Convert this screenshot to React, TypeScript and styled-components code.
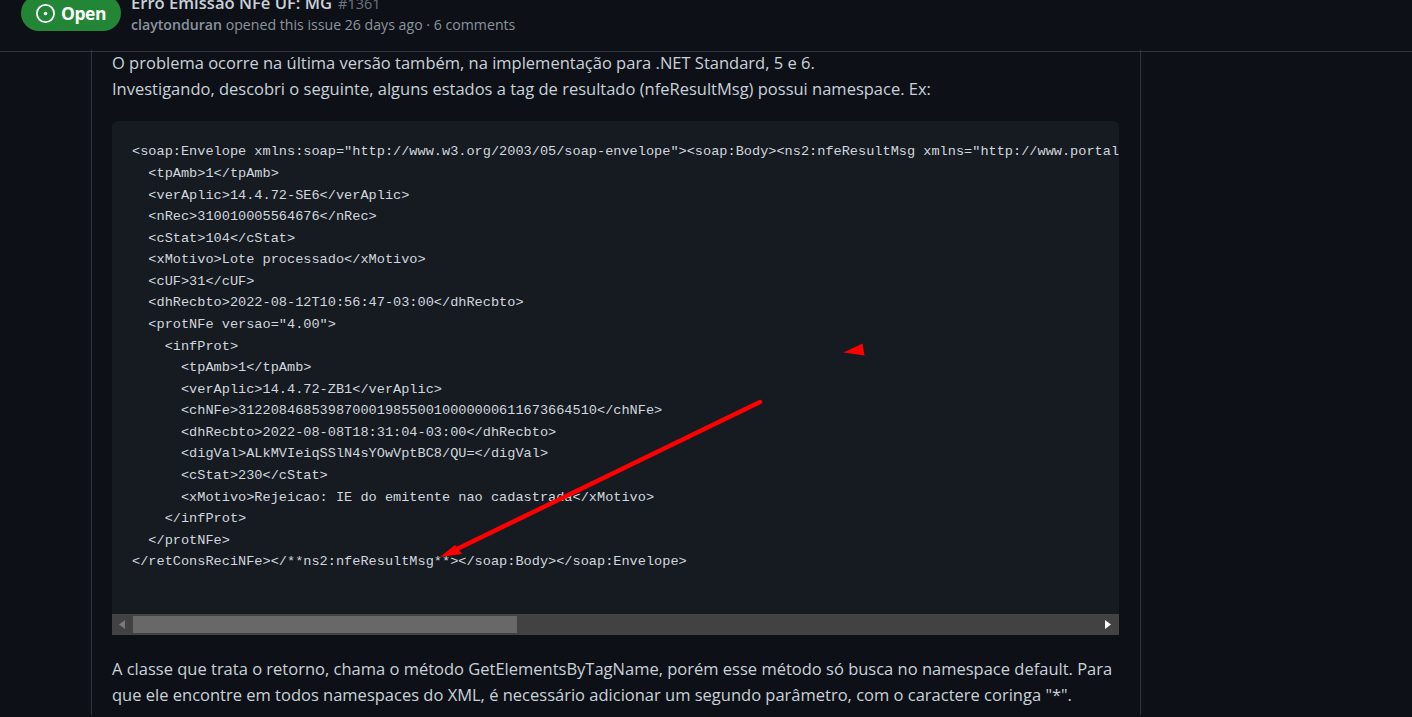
import React from "react";
import styled, { createGlobalStyle } from "styled-components";

const Global = createGlobalStyle`
  html, body { margin: 0; padding: 0; background: #0d1117; }
  body { font-family: "Open Sans", "Noto Sans", sans-serif; color: #c9d1d9; }
`;

const Page = styled.div`
  position: relative;
  height: 717px;
  overflow: hidden;
  background: #0d1117;
`;

const Header = styled.header`
  height: 51px;
  border-bottom: 1px solid #30363d;
  padding: 0 0 0 21px;
  display: flex;
  align-items: flex-end;
  gap: 10px;
  overflow: hidden;
`;

const StateBadge = styled.div`
  flex: none;
  width: 100px;
  height: 36px;
  margin-bottom: 20px;
  border-radius: 18px;
  background: #238636;
  color: #fff;
  display: flex;
  align-items: center;
  justify-content: center;
  gap: 6px;
  font-size: 17.5px;
  font-weight: 700;
  letter-spacing: -0.5px;
`;

const HeaderText = styled.div`
  margin-bottom: 16px;
  display: flex;
  flex-direction: column;
`;

const Title = styled.div`
  font-size: 16.6px;
  line-height: 22px;
  font-weight: 600;
  color: #c9d1d9;
  white-space: nowrap;
`;

const IssueNumber = styled.span`
  margin-left: 6px;
  font-size: 14.5px;
  font-weight: 400;
  color: #6e7681;
`;

const Meta = styled.div`
  font-size: 14.15px;
  line-height: 20px;
  color: #8b949e;
  white-space: nowrap;
`;

const Author = styled.b`
  font-weight: 600;
`;

const Column = styled.main`
  height: 665px;
  width: 1007px;
  margin-left: 91px;
  border-left: 1px solid #30363d;
  border-right: 1px solid #30363d;
  padding: 0 21px 0 20px;
`;

const Paragraph = styled.p<{ $top: number; $bottom: number }>`
  margin: ${(p) => p.$top}px 0 ${(p) => p.$bottom}px;
  font-size: 16.5px;
  line-height: 26px;
  white-space: nowrap;
`;

const CodeBlock = styled.div`
  height: 514px;
  border-radius: 6px 6px 0 0;
  background: #161b22;
  display: flex;
  flex-direction: column;
  overflow: hidden;
`;

const Code = styled.pre`
  flex: 1;
  margin: 0;
  padding: 20.4px 0 0 20px;
  overflow: hidden;
  font-family: "Liberation Mono", "DejaVu Sans Mono", monospace;
  font-size: 13.6px;
  line-height: 21.58px;
  color: #d0d7de;
`;

const ScrollTrack = styled.div`
  flex: none;
  height: 21px;
  background: #424242;
  display: flex;
  align-items: center;
  padding: 0 8px 0 7px;
`;

const ScrollThumb = styled.div`
  width: 384px;
  height: 17px;
  margin-left: 8px;
  background: #686868;
`;

const ScrollSpacer = styled.div`
  flex: 1;
`;

const ArrowOverlay = styled.svg`
  position: absolute;
  inset: 0;
  pointer-events: none;
`;

const code = `<soap:Envelope xmlns:soap="http://www.w3.org/2003/05/soap-envelope"><soap:Body><ns2:nfeResultMsg xmlns="http://www.portalfiscal.inf.br/nfe/wsdl/NFeRetAutorizacao4">
  <tpAmb>1</tpAmb>
  <verAplic>14.4.72-SE6</verAplic>
  <nRec>310010005564676</nRec>
  <cStat>104</cStat>
  <xMotivo>Lote processado</xMotivo>
  <cUF>31</cUF>
  <dhRecbto>2022-08-12T10:56:47-03:00</dhRecbto>
  <protNFe versao="4.00">
    <infProt>
      <tpAmb>1</tpAmb>
      <verAplic>14.4.72-ZB1</verAplic>
      <chNFe>31220846853987000198550010000000611673664510</chNFe>
      <dhRecbto>2022-08-08T18:31:04-03:00</dhRecbto>
      <digVal>ALkMVIeiqSSlN4sYOwVptBC8/QU=</digVal>
      <cStat>230</cStat>
      <xMotivo>Rejeicao: IE do emitente nao cadastrada</xMotivo>
    </infProt>
  </protNFe>
</retConsReciNFe></**ns2:nfeResultMsg**></soap:Body></soap:Envelope>`;

export default function App() {
  return (
    <Page>
      <Global />
      <Header>
        <StateBadge>
          <svg width="19" height="19" viewBox="0 0 16 16" fill="#fff">
            <path d="M8 9.5a1.5 1.5 0 1 0 0-3 1.5 1.5 0 0 0 0 3Z" />
            <path d="M8 0a8 8 0 1 1 0 16A8 8 0 0 1 8 0ZM1.5 8a6.5 6.5 0 1 0 13 0 6.5 6.5 0 0 0-13 0Z" />
          </svg>
          Open
        </StateBadge>
        <HeaderText>
          <Title>
            Erro Emissão NFe UF: MG<IssueNumber>#1361</IssueNumber>
          </Title>
          <Meta>
            <Author>claytonduran</Author> opened this issue 26 days ago · 6 comments
          </Meta>
        </HeaderText>
      </Header>
      <Column>
        <Paragraph $top={-2} $bottom={19}>
          O problema ocorre na última versão também, na implementação para .NET Standard, 5 e 6.
          <br />
          Investigando, descobri o seguinte, alguns estados a tag de resultado (nfeResultMsg) possui namespace. Ex:
        </Paragraph>
        <CodeBlock>
          <Code>{code}</Code>
          <ScrollTrack>
            <svg width="6" height="9" viewBox="0 0 6 9" fill="#7a7a7a">
              <path d="M6 0v9L0 4.5Z" />
            </svg>
            <ScrollThumb />
            <ScrollSpacer />
            <svg width="6" height="9" viewBox="0 0 6 9" fill="#fff">
              <path d="M0 0v9l6-4.5Z" />
            </svg>
          </ScrollTrack>
        </CodeBlock>
        <Paragraph $top={21} $bottom={0}>
          A classe que trata o retorno, chama o método GetElementsByTagName, porém esse método só busca no namespace default. Para
          <br />
          que ele encontre em todos namespaces do XML, é necessário adicionar um segundo parâmetro, com o caractere coringa "*".
        </Paragraph>
      </Column>
      <ArrowOverlay width="1412" height="717" viewBox="0 0 1412 717">
        <polygon points="843.5,352.5 862.5,343.5 864.5,355.5" fill="#ff0000" />
        <line x1="760" y1="402" x2="455" y2="550" stroke="#ff0000" strokeWidth="4.5" strokeLinecap="round" />
        <polygon points="440,557 455,545 462,554" fill="#ff0000" />
      </ArrowOverlay>
    </Page>
  );
}
